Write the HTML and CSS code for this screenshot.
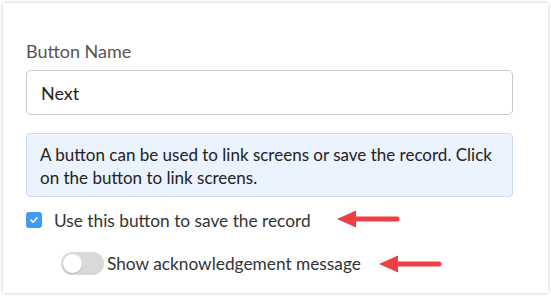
FILE: index.html
```html
<!DOCTYPE html>
<html lang="en">
<head>
  <meta charset="UTF-8">
  <title>Button settings</title>
  <link rel="stylesheet" href="styles.css">
</head>
<body>
  <div class="card">
    <label class="fieldLabel" for="buttonName">Button Name</label>
    <input class="textInput" id="buttonName" type="text" value="Next">
    <div class="infoBox">A button can be used to link screens or save the record. Click on the button to link screens.</div>
    <div class="checkRow">
      <span class="checkbox">
        <svg width="10" height="10" viewBox="0 0 10 10"><path d="M2 5.2 L4.1 7.2 L8 2.8" fill="none" stroke="#fff" stroke-width="1.7" stroke-linecap="round" stroke-linejoin="round"/></svg>
      </span>
      <span class="rowText">Use this button to save the record</span>
      <svg class="arrow arrowOne" width="64" height="20" viewBox="0 0 64 20"><path d="M18 10 H61" stroke="#f03e45" stroke-width="5" stroke-linecap="round"/><path d="M1 10 L20 1.5 L20 18.5 Z" fill="#f03e45"/></svg>
    </div>
    <div class="toggleRow">
      <span class="toggle"><span class="knob"></span></span>
      <span class="rowText">Show acknowledgement message</span>
      <svg class="arrow arrowTwo" width="64" height="20" viewBox="0 0 64 20"><path d="M18 10 H61" stroke="#f03e45" stroke-width="5" stroke-linecap="round"/><path d="M1 10 L20 1.5 L20 18.5 Z" fill="#f03e45"/></svg>
    </div>
  </div>
</body>
</html>
```

FILE: styles.css
```css
* {
  margin: 0;
  padding: 0;
  box-sizing: border-box;
}
body {
  font-family: Lato, "Liberation Sans", sans-serif;
  color: #333;
  background-color: #fff;
}
.card {
  margin: 3px;
  height: 290px;
  padding: 38px 35px 0 23px;
  background-color: #fff;
  box-shadow: 0 0 4px rgba(0, 0, 0, 0.22);
}
.fieldLabel {
  display: block;
  font-size: 18px;
  line-height: 20px;
  color: #555;
  margin-bottom: 9px;
}
.textInput {
  display: block;
  width: 100%;
  height: 45px;
  padding: 0 14px;
  font-family: inherit;
  font-size: 18px;
  color: #222;
  border: 1px solid #c9c9c9;
  border-radius: 5px;
  outline: none;
}
.infoBox {
  margin-top: 18px;
  padding: 9px 13px 7px;
  font-size: 17px;
  line-height: 23px;
  color: #222;
  background-color: #ebf3fe;
  border: 1px solid #c8dcf6;
  border-radius: 4px;
}
.checkRow {
  display: flex;
  align-items: center;
  margin-top: 13px;
  height: 20px;
}
.checkbox {
  display: flex;
  align-items: center;
  justify-content: center;
  width: 16px;
  height: 16px;
  border-radius: 3px;
  background-color: #3f9bf5;
  margin-right: 12px;
}
.rowText {
  font-size: 17.3px;
  color: #333;
}
.arrow {
  margin-top: -3px;
}
.arrowOne {
  margin-left: 25px;
}
.toggleRow {
  display: flex;
  align-items: center;
  margin-top: 21px;
  margin-left: 35px;
  height: 24px;
}
.toggle {
  position: relative;
  display: inline-block;
  width: 43px;
  height: 23px;
  border-radius: 12px;
  background-color: #d9d9d9;
  margin-right: 3px;
}
.knob {
  position: absolute;
  top: 2px;
  left: 2px;
  width: 19px;
  height: 19px;
  border-radius: 50%;
  background-color: #fff;
  box-shadow: 0 1px 2px rgba(0, 0, 0, 0.15);
}
.arrowTwo {
  margin-left: 17px;
  margin-top: 1px;
}
```
